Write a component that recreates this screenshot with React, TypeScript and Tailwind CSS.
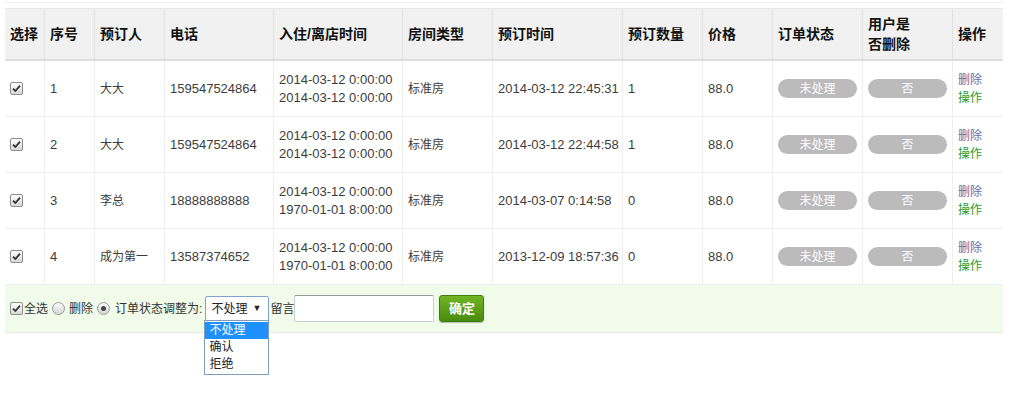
const FONT = { fontFamily: '"Liberation Sans", Arial, "Noto Sans CJK SC", sans-serif' }

const COLS = 'grid grid-cols-[39px_50px_70px_109px_129px_90px_130px_80px_70px_90px_90px_51px]'

interface Order {
  id: number
  name: string
  phone: string
  checkIn: string
  checkOut: string
  room: string
  bookedAt: string
  count: number
  price: string
}

const ORDERS: Order[] = [
  { id: 1, name: '大大', phone: '159547524864', checkIn: '2014-03-12 0:00:00', checkOut: '2014-03-12 0:00:00', room: '标准房', bookedAt: '2014-03-12 22:45:31', count: 1, price: '88.0' },
  { id: 2, name: '大大', phone: '159547524864', checkIn: '2014-03-12 0:00:00', checkOut: '2014-03-12 0:00:00', room: '标准房', bookedAt: '2014-03-12 22:44:58', count: 1, price: '88.0' },
  { id: 3, name: '李总', phone: '18888888888', checkIn: '2014-03-12 0:00:00', checkOut: '1970-01-01 8:00:00', room: '标准房', bookedAt: '2014-03-07 0:14:58', count: 0, price: '88.0' },
  { id: 4, name: '成为第一', phone: '13587374652', checkIn: '2014-03-12 0:00:00', checkOut: '1970-01-01 8:00:00', room: '标准房', bookedAt: '2013-12-09 18:57:36', count: 0, price: '88.0' },
]

const HEADERS = ['选择', '序号', '预订人', '电话', '入住/离店时间', '房间类型', '预订时间', '预订数量', '价格', '订单状态', '', '操作']

function CheckBox() {
  return (
    <span className="flex h-[13px] w-[13px] shrink-0 items-center justify-center rounded-[2px] border border-[#8e8e8e] bg-gradient-to-b from-[#fdfdfd] to-[#d9d9d9]">
      <svg width="9" height="9" viewBox="0 0 9 9">
        <path d="M1 4.6 L3.4 7 L8 1.6" fill="none" stroke="#333" strokeWidth="1.8" />
      </svg>
    </span>
  )
}

function Radio({ checked }: { checked?: boolean }) {
  return (
    <span className="flex h-[13px] w-[13px] shrink-0 items-center justify-center rounded-full border border-[#9a9a9a] bg-gradient-to-b from-[#fafafa] to-[#d6d6d6]">
      {checked && <span className="h-[5px] w-[5px] rounded-full bg-[#444]" />}
    </span>
  )
}

function Pill({ label }: { label: string }) {
  return (
    <span className="flex h-[19px] w-[79px] items-center justify-center rounded-full bg-[#bbbbbb] text-[12px] text-white">
      {label}
    </span>
  )
}

const cell = 'flex items-center whitespace-nowrap px-[5px]'

export default function App() {
  return (
    <div className="min-h-[400px] bg-white px-[5px] pt-[2px] text-[#444]" style={FONT}>
      <div className="h-[6px] w-[998px] border-t border-[#eeeeee]" />

      <div className="w-[998px]">
        <div className={`${COLS} h-[53px] border-t border-b-2 border-t-[#e6e6e6] border-b-[#dddddd] bg-[#f1f1f1] text-[14px] font-bold leading-[20px] text-[#111]`}>
          {HEADERS.map((h, i) => (
            <div key={i} className={`${cell} ${i > 0 ? 'border-l border-[#e0e0e0]' : ''}`}>
              {i === 10 ? (
                <span>
                  用户是
                  <br />
                  否删除
                </span>
              ) : (
                h
              )}
            </div>
          ))}
        </div>

        {ORDERS.map((o) => (
          <div key={o.id} className={`${COLS} h-[56px] border-b border-[#eeeeee] text-[13px] leading-[18px] text-[#3c3c3c]`}>
            <div className={cell}>
              <CheckBox />
            </div>
            <div className={`${cell} border-l border-[#eeeeee]`}>{o.id}</div>
            <div className={`${cell} border-l border-[#eeeeee] text-[12px]`}>{o.name}</div>
            <div className={`${cell} border-l border-[#eeeeee]`}>{o.phone}</div>
            <div className={`${cell} border-l border-[#eeeeee]`}>
              <div>
                <div>{o.checkIn}</div>
                <div>{o.checkOut}</div>
              </div>
            </div>
            <div className={`${cell} border-l border-[#eeeeee] text-[12px]`}>{o.room}</div>
            <div className={`${cell} border-l border-[#eeeeee]`}>{o.bookedAt}</div>
            <div className={`${cell} border-l border-[#eeeeee]`}>{o.count}</div>
            <div className={`${cell} border-l border-[#eeeeee]`}>{o.price}</div>
            <div className={`${cell} border-l border-[#eeeeee]`}>
              <Pill label="未处理" />
            </div>
            <div className={`${cell} border-l border-[#eeeeee]`}>
              <Pill label="否" />
            </div>
            <div className={`${cell} border-l border-[#eeeeee] text-[12px]`}>
              <div>
                <div className="text-[#6a6aa6]">删除</div>
                <div className="text-[#1f9a1f]">操作</div>
              </div>
            </div>
          </div>
        ))}

        <div className="flex h-[48px] items-center border-b border-[#e8e8e8] bg-[#f0fbea] pl-[5px] text-[12px] text-[#333]">
          <CheckBox />
          <span className="ml-[1px]">全选</span>
          <span className="ml-[4px]">
            <Radio />
          </span>
          <span className="ml-[4px]">删除</span>
          <span className="ml-[4px]">
            <Radio checked />
          </span>
          <span className="ml-[5px]">订单状态调整为:</span>

          <div className="relative ml-[3px]">
            <div className="flex h-[25px] w-[64px] items-center justify-between rounded-[2px] border border-[#7fa2d2] bg-white pl-[5px] pr-[7px] text-[#222]">
              <span>不处理</span>
              <span className="text-[9px]">▼</span>
            </div>
            <div className="absolute left-[-1px] top-[24px] w-[65px] border border-[#7f9db9] bg-white py-[1px] leading-[17px] text-[#222]">
              <div className="bg-[#1e90ff] pl-[4px] text-white">不处理</div>
              <div className="pl-[4px]">确认</div>
              <div className="pl-[4px]">拒绝</div>
            </div>
          </div>

          <span className="ml-[1px]">留言</span>
          <div className="h-[27px] w-[140px] rounded-[2px] border border-[#cccccc] border-t-[#999999] bg-white" />
          <button
            type="button"
            className="ml-[5px] h-[27px] w-[45px] rounded-[3px] border border-[#3f7d0b] bg-gradient-to-b from-[#70b524] to-[#4a8c0c] text-[13px] font-bold text-white shadow-[0_1px_1px_rgba(0,0,0,0.25)]"
          >
            确定
          </button>
        </div>
      </div>
    </div>
  )
}
